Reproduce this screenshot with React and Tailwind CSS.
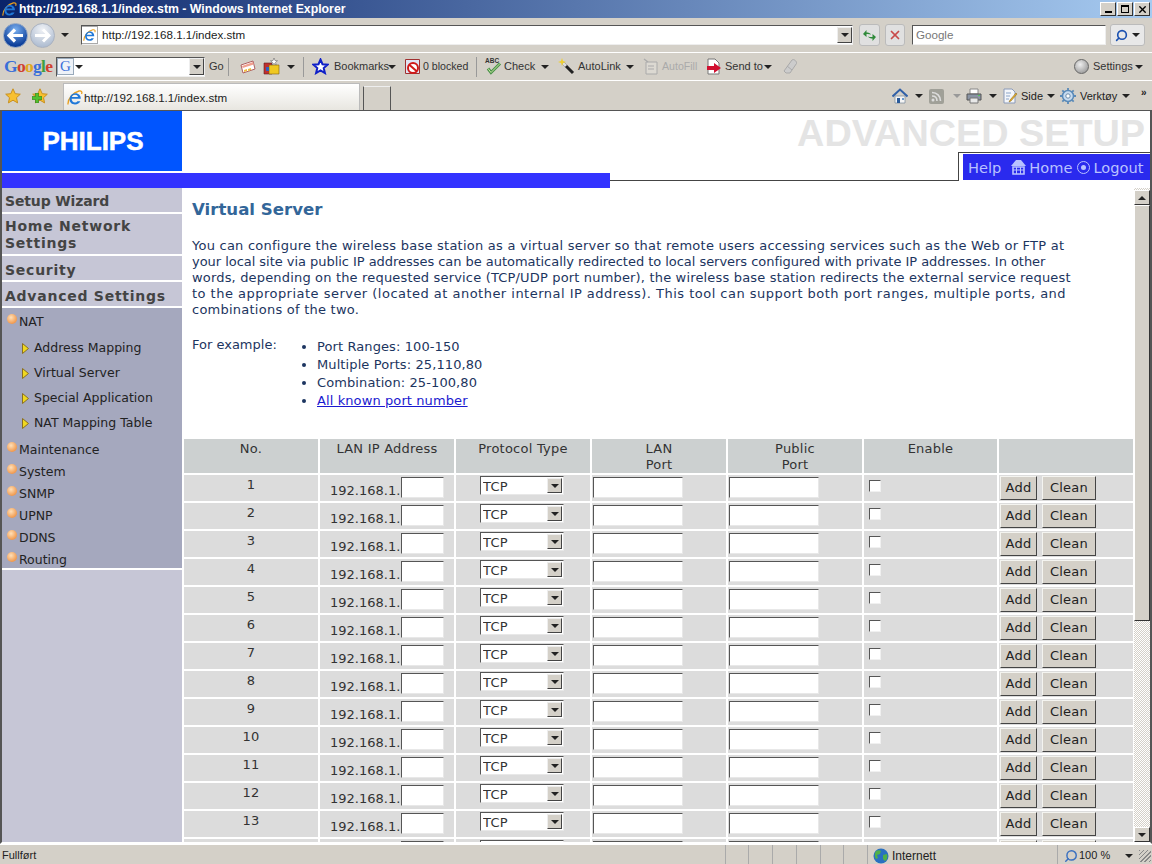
import { Search, X } from "lucide-react";

const rows = [1, 2, 3, 4, 5, 6, 7, 8, 9, 10, 11, 12, 13, 14];
const topNav = ["Maintenance", "System", "SNMP", "UPNP", "DDNS", "Routing"];
const natNav = ["Address Mapping", "Virtual Server", "Special Application", "NAT Mapping Table"];

function Arrow({ className = "" }) {
  return <span className={`h-0 w-0 shrink-0 border-x-[4px] border-t-[4px] border-x-transparent border-t-[#222] ${className}`} />;
}

function IeLogo({ size = 16 }) {
  return (
    <svg width={size} height={size} viewBox="0 0 16 16" className="shrink-0">
      <path d="M1 14.500C.5 9 6 2.500 12 1c2.500-.5 3.500 1 2.500 3" fill="none" stroke="#e8a020" strokeWidth="1.300" />
      <path d="M4.600 8.800h9.200C14 5.500 11.500 3.200 8.500 3.200 5 3.200 2.600 6 2.600 9.300s2.200 5.200 5.400 5.200c2.600 0 4.500-1.200 5.400-3.200h-3c-.5.800-1.300 1.200-2.300 1.200-2 0-3.400-1.500-3.500-3.700zM4.800 7c.4-1.500 1.700-2.300 3.200-2.300S10.800 5.600 11 7z" fill="#1f78d8" fillRule="evenodd" />
    </svg>
  );
}

function ComboArrow({ className = "" }) {
  return (
    <span className={`flex items-center justify-center border border-t-[#eee] border-l-[#eee] border-r-[#444] border-b-[#444] bg-[#d4d0c8] ${className}`}>
      <Arrow />
    </span>
  );
}

function GoldStar() {
  return (
    <svg width="16" height="16" viewBox="0 0 16 16" className="shrink-0">
      <path d="M8 .8l2.200 4.900 5.100.5-3.800 3.500 1.100 5.200L8 12.200l-4.600 2.700 1.100-5.200L.7 6.200l5.100-.5z" fill="#f8c030" stroke="#c89020" />
    </svg>
  );
}

function Bullet() {
  return <span className="mr-[2px] mt-[-6px] h-[10px] w-[10px] shrink-0 rounded-full bg-[radial-gradient(circle_at_40%_35%,#ffe0b8,#f09a50_70%)]" />;
}

function Field({ className = "" }) {
  return <input className={`h-[21px] border border-t-[#555] border-l-[#555] border-r-[#e8e8e8] border-b-[#e8e8e8] bg-white ${className}`} />;
}

function Row({ n }) {
  return (
    <>
      <div className="h-[26px] bg-[#dcdcdc] pt-[2px] text-center">{n}</div>
      <div className="flex h-[26px] items-start bg-[#dcdcdc] pl-[10px] pt-[2px]">
        <span className="mt-[6px] w-[71px] leading-[16px] tracking-normal">192.168.1.</span>
        <Field className="w-[43px]" />
      </div>
      <div className="h-[26px] bg-[#dcdcdc] pl-[24px] pt-[1px]">
        <div className="relative h-[19px] w-[84px]">
          <select className="h-[19px] w-[84px] appearance-none border border-t-[#555] border-l-[#555] border-r-[#e8e8e8] border-b-[#e8e8e8] bg-white pl-[2px] pt-[2px] leading-[14px]">
            <option>TCP</option>
          </select>
          <ComboArrow className="absolute right-[2px] top-[2px] h-[15px] w-[15px]" />
        </div>
      </div>
      <div className="h-[26px] bg-[#dcdcdc] pl-[1px] pt-[2px]">
        <Field className="h-[20px] w-[90px]" />
      </div>
      <div className="h-[26px] bg-[#dcdcdc] pl-[1px] pt-[2px]">
        <Field className="h-[20px] w-[90px]" />
      </div>
      <div className="h-[26px] bg-[#dcdcdc] pl-[5px] pt-[5px]">
        <span className="block h-[12px] w-[12px] border border-t-[#555] border-l-[#555] border-r-[#f0f0f0] border-b-[#f0f0f0] bg-white" />
      </div>
      <div className="flex h-[26px] gap-[5px] bg-[#dcdcdc] pl-[1px] pt-[1px]">
        <button className="h-[24px] w-[37px] border border-t-[#f4f4f0] border-l-[#f4f4f0] border-r-[#444] border-b-[#444] bg-[#d4d0c8] text-[#222]">Add</button>
        <button className="h-[24px] w-[54px] border border-t-[#f4f4f0] border-l-[#f4f4f0] border-r-[#444] border-b-[#444] bg-[#d4d0c8] text-[#222]">Clean</button>
      </div>
    </>
  );
}

function TitleBar() {
  return (
    <div className="flex h-[18px] items-center bg-[linear-gradient(90deg,#0a246a,#a6caf0)] pl-[2px] pr-[2px] font-['Liberation_Sans',sans-serif] text-[12.3px] font-bold text-white">
      <IeLogo size={15} />
      <span className="ml-[2px] flex-1">http://192.168.1.1/index.stm - Windows Internet Explorer</span>
      <div className="flex gap-[1px]">
        <span className="flex h-[14px] w-[16px] items-end justify-center border border-t-white border-l-white border-r-[#333] border-b-[#333] bg-[#d4d0c8] pb-[2px]"><span className="h-[2px] w-[7px] bg-black" /></span>
        <span className="flex h-[14px] w-[16px] items-center justify-center border border-t-white border-l-white border-r-[#333] border-b-[#333] bg-[#d4d0c8]"><span className="h-[8px] w-[8px] border border-t-2 border-black" /></span>
        <span className="flex h-[14px] w-[16px] items-center justify-center border border-t-white border-l-white border-r-[#333] border-b-[#333] bg-[#d4d0c8]"><X size={11} strokeWidth={3} className="text-black" /></span>
      </div>
    </div>
  );
}

function AddressBar() {
  return (
    <div className="flex h-[34px] items-center bg-[#d4d0c8] pl-[3px] font-['Liberation_Sans',sans-serif] text-[11.6px] text-[#222]">
      <span className="flex h-[25px] w-[25px] items-center justify-center rounded-full border border-[#8fa4c4] bg-[radial-gradient(circle_at_50%_25%,#7ab0f0,#0d3f9a_75%)]">
        <svg width="17" height="15" viewBox="0 0 17 15"><path d="M8 1.500 2 7.500l6 6M3 7.500h13" fill="none" stroke="#fff" strokeWidth="3.200" /></svg>
      </span>
      <span className="ml-[2px] flex h-[25px] w-[25px] items-center justify-center rounded-full border border-[#aab2c0] bg-[radial-gradient(circle_at_50%_25%,#f0f2f6,#b0bed2_80%)]">
        <svg width="17" height="15" viewBox="0 0 17 15"><path d="M9 1.500l6 6-6 6M14 7.500H1" fill="none" stroke="#fff" strokeWidth="3" /></svg>
      </span>
      <Arrow className="ml-[6px]" />
      <div className="ml-[12px] flex h-[20px] w-[772px] items-center border border-t-[#555] border-l-[#555] border-r-[#eee] border-b-[#eee] bg-white">
        <span className="flex h-[18px] w-[16px] items-center justify-center border-y border-r border-[#aaa]"><IeLogo size={13} /></span>
        <span className="ml-[4px] flex-1">http://192.168.1.1/index.stm</span>
        <ComboArrow className="h-[16px] w-[15px]" />
      </div>
      <span className="ml-[6px] flex h-[22px] w-[21px] items-center justify-center rounded-[3px] border border-[#bbb] bg-[#e0e0e0]">
        <svg width="15" height="15" viewBox="0 0 15 15"><path d="M1 6l3.500-4v2.500c2 0 3.500.5 4.500 2-1.500-.5-3-.7-4.500-.5V9zM14 9l-3.500 4v-2.500c-2 0-3.500-.5-4.500-2 1.500.5 3 .7 4.500.5V6z" fill="#2f8a3a" /></svg>
      </span>
      <span className="ml-[5px] flex h-[22px] w-[20px] items-center justify-center rounded-[3px] border border-[#bbb] bg-[#e0e0e0]"><X size={14} strokeWidth={3} className="text-[#c84a4a]" /></span>
      <div className="ml-[7px] flex h-[20px] w-[194px] items-center border border-t-[#555] border-l-[#555] border-r-[#eee] border-b-[#eee] bg-white pl-[3px] text-[#777]">Google</div>
      <span className="ml-[4px] flex h-[22px] w-[35px] items-center justify-center gap-[4px] rounded-[3px] border border-[#bbb] bg-[#e8e8e8]">
        <Search size={13} strokeWidth={3} className="-scale-x-100 text-[#1a50b0]" />
        <Arrow className="border-t-[#3a6ab0]" />
      </span>
    </div>
  );
}

function GoogleBar() {
  return (
    <div className="flex h-[28px] items-center border-t border-white bg-[#d4d0c8] font-['Liberation_Sans',sans-serif] text-[10.6px] text-[#333]">
      <span className="ml-[4px] w-[52px] font-['Liberation_Serif',serif] text-[17.5px] font-bold leading-none tracking-[-0.7px]">
        <span className="text-[#3a6fd8]">G</span><span className="text-[#d04030]">o</span><span className="text-[#e0a820]">o</span><span className="text-[#3a6fd8]">g</span><span className="text-[#40a040]">l</span><span className="text-[#d04030]">e</span>
      </span>
      <div className="flex h-[20px] w-[149px] items-center border border-t-[#555] border-l-[#555] border-r-[#eee] border-b-[#eee] bg-white">
        <span className="flex h-[17px] w-[17px] items-center justify-center border border-[#9ab] bg-[#eef2f8] font-['Liberation_Serif',serif] text-[15px] text-[#3a6fd8]">G</span>
        <Arrow className="ml-[1px]" />
        <span className="flex-1" />
        <ComboArrow className="h-[17px] w-[15px]" />
      </div>
      <span className="ml-[4px] w-[19px] text-[11px]">Go</span>
      <span className="h-[18px] w-[3px] border-l border-[#999]" />
      <svg width="16" height="14" viewBox="0 0 16 14" className="ml-[9px] shrink-0">
        <path d="M1 5 13 1l2 8L3 13z" fill="#fff" stroke="#b06060" />
        <path d="M2 6l11-4 .7 2.500-11 3.500z" fill="#f0a090" />
        <path d="M4 10l3-1v2l-3 1zM8 9l3-1v2l-3 1z" fill="#f0c040" />
      </svg>
      <svg width="17" height="17" viewBox="0 0 17 17" className="ml-[7px] shrink-0">
        <path d="M1 5h8v11H1z" fill="#c03030" stroke="#602020" strokeWidth=".6" />
        <path d="M6 7h10v9H6z" fill="#f0c820" stroke="#806010" strokeWidth=".6" />
        <path d="M3 9h3v4H3z" fill="#3060c0" />
        <path d="M11 0l1 2.500 2.500.2-2 1.600.7 2.500-2.200-1.400-2.200 1.400.7-2.500-2-1.600L10 2.500z" fill="#fff" stroke="#555" strokeWidth=".5" />
      </svg>
      <Arrow className="ml-[7px]" />
      <span className="ml-[8px] h-[20px] w-px bg-[#999]" />
      <svg width="17" height="17" viewBox="0 0 17 17" className="ml-[8px] shrink-0">
        <path d="M8.500 1.500l2 4.700 5 .5-3.800 3.300 1.200 5-4.400-2.700L4.100 15l1.200-5L1.500 6.700l5-.5z" fill="#fff" stroke="#1020c8" strokeWidth="2" />
      </svg>
      <span className="ml-[5px] w-[54px] text-[11px]">Bookmarks</span>
      <Arrow />
      <svg width="17" height="17" viewBox="0 0 17 17" className="ml-[8px] shrink-0">
        <path d="M1.500 1.500h14v14h-14z" fill="#dfe4f4" stroke="#a03030" />
        <circle cx="9" cy="10" r="5" fill="#fff" stroke="#d01818" strokeWidth="2" />
        <path d="M5 6.500l8 7" stroke="#d01818" strokeWidth="2" />
      </svg>
      <span className="ml-[2px] w-[48px]">0 blocked</span>
      <span className="ml-[5px] h-[20px] w-px bg-[#999]" />
      <span className="relative ml-[8px] h-[17px] w-[17px] shrink-0 font-bold">
        <span className="absolute left-0 top-[-1px] text-[6.5px] leading-[8px] text-[#333]">ABC</span>
        <svg width="17" height="17" viewBox="0 0 17 17" className="absolute left-0 top-0">
          <path d="M3 10.500l3 4 9-9" fill="none" stroke="#489048" strokeWidth="3" />
          <path d="M3 10.500l3 4 9-9" fill="none" stroke="#c8e8a0" strokeWidth="1" />
        </svg>
      </span>
      <span className="ml-[2px] w-[37px] text-[11px]">Check</span>
      <Arrow />
      <svg width="17" height="17" viewBox="0 0 17 17" className="ml-[9px] shrink-0">
        <path d="M5 5l10 10" stroke="#222" strokeWidth="3" />
        <path d="M5 5l3 3" stroke="#ddd" strokeWidth="3" />
        <path d="M4 0l1 3 3 1-3 1-1 3-1-3-3-1 3-1z" fill="#f0d030" />
      </svg>
      <span className="ml-[3px] w-[48px] text-[11px]">AutoLink</span>
      <Arrow />
      <svg width="17" height="17" viewBox="0 0 17 17" className="ml-[9px] shrink-0">
        <path d="M3 4h11v12H3z" fill="#dcd9d2" stroke="#aaa" />
        <path d="M1 1l4 3M5 8h6M5 11h6" stroke="#aaa" strokeWidth="1.200" />
      </svg>
      <span className="ml-[2px] w-[44px] text-[#aaa]">AutoFill</span>
      <svg width="16" height="17" viewBox="0 0 16 17" className="shrink-0">
        <path d="M2 1h7l4 4v11H2z" fill="#fff" stroke="#777" />
        <path d="M1 8h7V5l7 5-7 5v-3H1z" fill="#d01030" />
      </svg>
      <span className="ml-[3px] w-[39px] text-[11px]">Send to</span>
      <Arrow />
      <svg width="17" height="17" viewBox="0 0 17 17" className="ml-[10px] shrink-0"><path d="M2 13 10 2c2-1.500 5 1.500 4.500 3.500L8 15H4z" fill="#ccc" stroke="#aaa" /><path d="M5 8l5 4" stroke="#aaa" /></svg>
      <span className="flex-1" />
      <span className="h-[15px] w-[15px] rounded-full border border-[#666] bg-[radial-gradient(circle_at_40%_35%,#eee,#888)]" />
      <span className="ml-[4px] w-[42px] text-[11px]">Settings</span>
      <Arrow className="mr-[9px]" />
    </div>
  );
}

function TabBar() {
  return (
    <div className="flex h-[30px] items-end border-t border-white bg-[#d4d0c8] font-['Liberation_Sans',sans-serif] text-[11.6px] text-[#222]">
      <div className="flex h-[29px] items-center self-start">
        <span className="ml-[5px]"><GoldStar /></span>
        <span className="relative ml-[11px] h-[16px] w-[16px]">
          <GoldStar />
          <svg width="10" height="10" viewBox="0 0 10 10" className="absolute left-0 top-[5px]"><path d="M3.500 0h3v3.500H10v3H6.500V10h-3V6.500H0v-3h3.500z" fill="#50c030" stroke="#2a7a18" strokeWidth=".6" /></svg>
        </span>
      </div>
      <div className="ml-[15px] flex h-[27px] w-[297px] items-center border border-b-0 border-[#bbb] bg-[linear-gradient(#ffffff,#e8e6e0)] pl-[3px] pt-[1px]">
        <IeLogo />
        <span className="ml-[1px] pt-[1px]">http://192.168.1.1/index.stm</span>
      </div>
      <div className="ml-[3px] h-[24px] w-[28px] border-x border-t border-x-[#555] border-t-[#eee]" />
      <div className="ml-auto flex h-[29px] items-center self-start pt-[1px]">
        <svg width="16" height="16" viewBox="0 0 16 16" className="shrink-0">
          <path d="M3 8h10v7H3z" fill="#f4f4f4" stroke="#789" strokeWidth=".7" />
          <path d="M.5 8.500 8 1.500l7.500 7" fill="none" stroke="#3060a8" strokeWidth="2" />
          <path d="M5 10h3v5H5z" fill="#2a5a9a" />
          <path d="M10 10h2v2h-2z" fill="#6a9ad0" />
        </svg>
        <Arrow className="ml-[7px]" />
        <svg width="15" height="15" viewBox="0 0 15 15" className="ml-[6px] shrink-0">
          <rect width="15" height="15" rx="2" fill="#a0a098" />
          <circle cx="4" cy="11" r="1.500" fill="#ddd" />
          <path d="M3 7c3 0 5 2 5 5M3 3.500c5 0 8.500 3.500 8.500 8.500" fill="none" stroke="#ddd" strokeWidth="1.600" />
        </svg>
        <Arrow className="ml-[9px] border-t-[#999]" />
        <svg width="16" height="16" viewBox="0 0 16 16" className="ml-[5px] shrink-0">
          <path d="M4 1h8v5H4z" fill="#fff" stroke="#888" />
          <path d="M1 6h14v6H1z" fill="#8a94a4" stroke="#555" />
          <path d="M4 10h8v5H4z" fill="#e8e8e8" stroke="#777" />
          <path d="M12 7h2v1h-2z" fill="#5c5" />
        </svg>
        <Arrow className="ml-[7px]" />
        <svg width="16" height="16" viewBox="0 0 16 16" className="ml-[5px] shrink-0">
          <path d="M2 1h8l3 3v11H2z" fill="#f4f6fa" stroke="#8a9ab8" />
          <path d="M4 5h5M4 8h4M4 11h3" stroke="#8aa4c8" />
          <path d="M15 6l-6 7-2 1 1-2 6-7z" fill="#e8b030" stroke="#806010" strokeWidth=".5" />
        </svg>
        <span className="ml-[3px] w-[20px] text-[11px]">Side</span>
        <Arrow className="ml-[6px]" />
        <svg width="16" height="16" viewBox="0 0 16 16" className="ml-[5px] shrink-0">
          <circle cx="8" cy="8" r="5.500" fill="#c8dcf0" stroke="#5a8ab8" strokeWidth="1.500" />
          <circle cx="8" cy="8" r="2.200" fill="#fff" stroke="#6a8aa8" />
          <path d="M8 0v2.500M8 13.500V16M0 8h2.500M13.500 8H16M2.300 2.300l1.800 1.800M11.900 11.900l1.800 1.800M2.300 13.700l1.800-1.800M11.900 4.100l1.800-1.800" stroke="#5a8ab8" strokeWidth="1.800" />
        </svg>
        <span className="ml-[4px] w-[38px] text-[11px]">Verktøy</span>
        <Arrow className="ml-[4px]" />
        <span className="mb-[6px] ml-[11px] mr-[4px] w-[7px] text-[10px] font-bold leading-none">»</span>
      </div>
    </div>
  );
}

function Header() {
  return (
    <div className="flex h-[77px] bg-white">
      <div className="w-[608px]">
        <div className="flex h-[60px] w-[180px] items-center justify-center bg-[#0055ff] pl-[2px] pt-[1px] font-['Liberation_Sans',sans-serif] text-[26px] font-bold text-white [-webkit-text-stroke:0.5px_#fff]">PHILIPS</div>
        <div className="mt-[2px] h-[15px] bg-[#3333ff]" />
      </div>
      <div className="flex flex-1 flex-col">
        <div className="h-[41px] pr-[5px] text-right font-['Liberation_Sans',sans-serif] text-[37.8px] font-bold leading-[44px] text-[#e4e4e4]">ADVANCED SETUP</div>
        <div className="flex h-[29px]">
          <div className="flex-1 border-b border-[#444]" />
          <div className="w-[192px] border-l border-t border-[#444] pl-[4px] pt-[1px]">
            <div className="flex h-[26px] items-center bg-[#2a2aee] pl-[5px] pt-[1px] text-[14.6px] text-[#b9c2ff]">
              <span>Help</span>
              <svg width="17" height="17" viewBox="0 0 17 17" className="ml-[9px] shrink-0">
                <path d="M1 7 6 1h5l5 6z" fill="#b9c2ff" />
                <path d="M3 8h11v7H3z" fill="none" stroke="#b9c2ff" strokeWidth="1.600" />
                <path d="M6.500 8v7M10.500 8v7M3 11h11" stroke="#b9c2ff" />
              </svg>
              <span className="ml-[2px]">Home</span>
              <span className="ml-[5px] flex h-[13px] w-[13px] shrink-0 items-center justify-center rounded-full border border-[#b9c2ff]"><span className="h-[5px] w-[5px] rounded-full bg-[#b9c2ff]" /></span>
              <span className="ml-[3px]">Logout</span>
            </div>
          </div>
        </div>
      </div>
    </div>
  );
}

function Sidebar() {
  const head = "border-b-2 border-white bg-[#c6c6d6] pl-[3px] text-[14px] font-bold tracking-[0.75px] text-[#444]";
  return (
    <div className="w-[180px] shrink-0 bg-[#c6c6d6]">
      <div className="h-[26px] border-b-2 border-white bg-[#c6c6d6] pl-[3px] pt-[4px] text-[14px] font-bold leading-[18px] tracking-[-0.15px] text-[#444]">Setup Wizard</div>
      <div className={`${head} h-[42px] pt-[4px] leading-[17px]`}>Home Network Settings</div>
      <div className={`${head} h-[26px] pt-[5px] leading-[18px]`}>Security</div>
      <div className={`${head} h-[26px] pt-[5px] leading-[18px]`}>Advanced Settings</div>
      <div className="h-[262px] border-b-2 border-white bg-[#a5a8be] pl-[5px] pt-[3px] text-[12.5px] text-[#222]">
        <div className="flex h-[22px] items-center"><Bullet />NAT</div>
        {natNav.map((item) => (
          <div key={item} className="flex h-[25px] items-center pl-[15px] pt-[5px] text-[#222]">
            <svg width="7" height="11" viewBox="0 0 7 11" className="mr-[5px] shrink-0"><path d="M.5.500 6.500 5.500.5 10.500z" fill="#f0d820" stroke="#8a7020" /></svg>
            {item}
          </div>
        ))}
        <div className="h-[6px]" />
        {topNav.map((item) => (
          <div key={item} className="flex h-[22px] items-center"><Bullet />{item}</div>
        ))}
      </div>
    </div>
  );
}

function Scrollbar() {
  return (
    <div className="flex w-[16px] shrink-0 flex-col bg-[repeating-conic-gradient(#d4d0c8_0_25%,#ffffff_0_50%)] bg-[length:2px_2px] pt-[2px]">
      <span className="flex h-[15px] w-[16px] items-center justify-center border border-t-white border-l-white border-r-[#333] border-b-[#333] bg-[#d4d0c8]">
        <Arrow className="rotate-180" />
      </span>
      <span className="h-[416px] w-[16px] border border-t-white border-l-white border-r-[#333] border-b-[#333] bg-[#d4d0c8]" />
      <span className="flex-1" />
      <span className="flex h-[15px] w-[16px] items-center justify-center border border-t-white border-l-white border-r-[#333] border-b-[#333] bg-[#d4d0c8]">
        <Arrow />
      </span>
    </div>
  );
}

function Content() {
  return (
    <div className="h-[654px] flex-1 overflow-hidden bg-white text-[13px] leading-[16px] tracking-[0.24px] text-[#1c3560]">
      <div className="pl-[10px] pr-[10px]">
        <h1 className="pt-[12px] text-[16.6px] font-bold leading-[20px] tracking-normal text-[#336699]">Virtual Server</h1>
        {/* the lines are broken by hand, Verdana's widths differ from DejaVu's */}
        <p className="mt-[18px] whitespace-nowrap">
          <span className="block tracking-[0.24px]">You can configure the wireless base station as a virtual server so that remote users accessing services such as the Web or FTP at</span>
          <span className="block tracking-[-0.04px]">your local site via public IP addresses can be automatically redirected to local servers configured with private IP addresses. In other</span>
          <span className="block tracking-[0.17px]">words, depending on the requested service (TCP/UDP port number), the wireless base station redirects the external service request</span>
          <span className="block tracking-[0.48px]">to the appropriate server (located at another internal IP address). This tool can support both port ranges, multiple ports, and</span>
          <span className="block">combinations of the two.</span>
        </p>
        <div className="mt-[19px] flex">
          <span className="w-[110px] tracking-normal">For example:</span>
          <ul className="mt-[1px] list-outside list-disc pl-[15px] leading-[18px] tracking-[0.1px]">
            <li>Port Ranges: 100-150</li>
            <li>Multiple Ports: 25,110,80</li>
            <li>Combination: 25-100,80</li>
            <li><a className="text-[#1a1ad0] underline">All known port number</a></li>
          </ul>
        </div>
      </div>
      <div className="ml-[2px] mt-[29px] grid w-[950px] grid-cols-[repeat(5,134px)_133px_134px] gap-[2px] text-[#333]">
        <div className="h-[34px] bg-[#ccd0d0] pt-[2px] text-center">No.</div>
        <div className="h-[34px] bg-[#ccd0d0] pt-[2px] text-center">LAN IP Address</div>
        <div className="h-[34px] bg-[#ccd0d0] pt-[2px] text-center">Protocol Type</div>
        <div className="h-[34px] bg-[#ccd0d0] pt-[2px] text-center">LAN<br />Port</div>
        <div className="h-[34px] bg-[#ccd0d0] pt-[2px] text-center">Public<br />Port</div>
        <div className="h-[34px] bg-[#ccd0d0] pt-[2px] text-center">Enable</div>
        <div className="h-[34px] bg-[#ccd0d0]" />
        {rows.map((n) => (
          <Row key={n} n={n} />
        ))}
      </div>
    </div>
  );
}

function StatusBar() {
  return (
    <div className="flex h-[20px] items-center border-t border-white bg-[#d4d0c8] font-['Liberation_Sans',sans-serif] text-[11px] text-[#222]">
      <span className="w-[725px] pl-[2px] pt-[2px]">Fullført</span>
      <span className="h-full w-[23px] border-l border-[#aaa]" />
      <span className="h-full w-[24px] border-l border-[#aaa]" />
      <span className="h-full w-[24px] border-l border-[#aaa]" />
      <span className="h-full w-[24px] border-l border-[#aaa]" />
      <span className="h-full w-[23px] border-l border-[#aaa]" />
      <span className="h-full w-[24px] border-l border-[#aaa]" />
      <div className="flex h-full w-[190px] items-center border-l border-[#aaa] pl-[5px] pt-[2px]">
        <svg width="16" height="16" viewBox="0 0 16 16" className="shrink-0">
          <circle cx="8" cy="8" r="7.500" fill="#2a70c0" />
          <path d="M3 3c2-1 4-1 5 0l-1 3-3 1 1 3-2 1C1.500 9 1.500 5 3 3zM10 7l4-1c1 3 0 6-2 7l-2-2z" fill="#50b048" />
        </svg>
        <span className="ml-[3px] text-[12px]">Internett</span>
      </div>
      <div className="flex h-full flex-1 items-center border-l border-[#aaa] pl-[6px] pt-[2px]">
        <Search size={14} strokeWidth={2.5} className="-scale-x-100 text-[#3a70c0]" />
        <span className="ml-[1px] w-[32px]">100 %</span>
        <Arrow className="ml-[14px]" />
        <span className="ml-auto mr-[1px] h-[12px] w-[12px] bg-[repeating-linear-gradient(135deg,#888_0_1px,#d4d0c8_1px_3px)]" />
      </div>
    </div>
  );
}

export default function App() {
  return (
    <div className="flex h-[864px] w-[1152px] flex-col overflow-hidden bg-[#d4d0c8] font-['DejaVu_Sans',sans-serif]">
      <TitleBar />
      <AddressBar />
      <GoogleBar />
      <TabBar />
      <div className="flex-1 border-x-2 border-t border-x-[#555] border-t-[#555] border-b-2 border-b-white bg-white">
        <Header />
        <div className="flex h-[654px]">
          <Sidebar />
          <Content />
          <Scrollbar />
        </div>
      </div>
      <StatusBar />
    </div>
  );
}
